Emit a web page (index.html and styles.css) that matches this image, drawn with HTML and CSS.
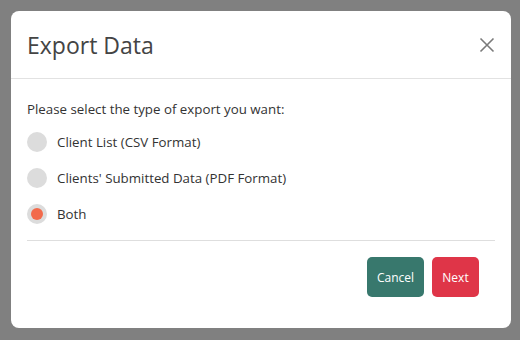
FILE: index.html
```html
<!DOCTYPE html>
<html>

<head>
    <title>Export Data</title>
    <meta name="viewport" content="width=device-width, initial-scale=1.0">
    <link rel="stylesheet" href="styles.css">
</head>

<body>
    <div class="modal">
        <header class="modal-header">
            <h2>Export Data</h2>
            <button class="close" aria-label="Close">
                <svg width="16" height="16" viewBox="0 0 16 16">
                    <path d="M1.5 1.5 L14.5 14.5 M14.5 1.5 L1.5 14.5" stroke="#7a7a7a" stroke-width="1.6" fill="none" />
                </svg>
            </button>
        </header>
        <div class="modal-body">
            <p class="prompt">Please select the type of export you want:</p>
            <label class="option">
                <input type="radio" name="export" value="csv">
                <span class="dot"></span>
                Client List (CSV Format)
            </label>
            <label class="option">
                <input type="radio" name="export" value="pdf">
                <span class="dot"></span>
                Clients' Submitted Data (PDF Format)
            </label>
            <label class="option">
                <input type="radio" name="export" value="both" checked>
                <span class="dot"></span>
                Both
            </label>
        </div>
        <footer class="modal-footer">
            <button class="btn btn-cancel">Cancel</button>
            <button class="btn btn-next">Next</button>
        </footer>
    </div>
</body>

</html>
```

FILE: styles.css
```css
body {
    font-family: "Open Sans", "Noto Sans", sans-serif;
    background-color: #808080;
    margin: 0;
    padding: 11px 9px 0 11px;
}

.modal {
    width: 500px;
    height: 317px;
    background-color: #fff;
    border-radius: 8px;
    color: #333;
}

.modal-header {
    height: 68px;
    box-sizing: border-box;
    padding: 0 16px;
    border-bottom: 1px solid #e2e2e2;
    display: flex;
    align-items: center;
    justify-content: space-between;
}

.modal-header h2 {
    margin: 0;
    font-size: 23px;
    font-weight: normal;
    color: #444;
}

.close {
    background: none;
    border: 0;
    padding: 0;
    display: flex;
}

.modal-body {
    margin: 0 16px;
    padding: 21px 0 8px;
    border-bottom: 1px solid #dedede;
}

.prompt {
    margin: 0 0 6px 0;
    font-size: 13.3px;
    line-height: 18px;
}

.option {
    display: flex;
    align-items: center;
    height: 36px;
    font-size: 13.3px;
}

.option input {
    display: none;
}

.dot {
    width: 20px;
    height: 20px;
    border-radius: 50%;
    background-color: #dcdcdc;
    margin-right: 10px;
    display: flex;
    align-items: center;
    justify-content: center;
}

.option input:checked + .dot::after {
    content: "";
    width: 12px;
    height: 12px;
    border-radius: 50%;
    background-color: #f26a4b;
}

.modal-footer {
    display: flex;
    justify-content: flex-end;
    gap: 8px;
    padding: 16px 32px 0 16px;
}

.btn {
    height: 40px;
    border: 0;
    border-radius: 5px;
    color: #fff;
    font-family: inherit;
    font-size: 12px;
    padding: 0;
}

.btn-cancel {
    width: 57px;
    background-color: #38786d;
}

.btn-next {
    width: 47px;
    background-color: #df3548;
}
```
